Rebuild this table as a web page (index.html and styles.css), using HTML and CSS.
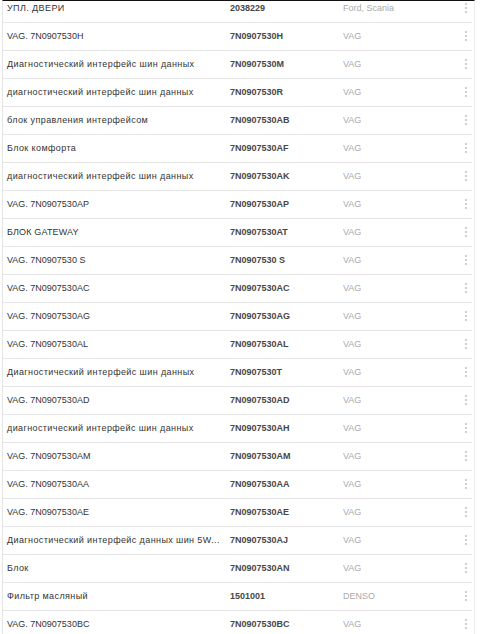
FILE: index.html
```html
<!DOCTYPE html>
<html lang="ru">
<head>
<meta charset="utf-8">
<link rel="stylesheet" href="styles.css">
</head>
<body>
<div class="viewport">
  <div class="list">
    <div class="row"><span class="name cyr">УПЛ. ДВЕРИ</span><span class="code">2038229</span><span class="brand">Ford, Scania</span><span class="more"><svg width="4" height="12" viewBox="0 0 4 12"><circle cx="2" cy="2" r="1.1"/><circle cx="2" cy="6" r="1.1"/><circle cx="2" cy="10" r="1.1"/></svg></span></div>
    <div class="row"><span class="name">VAG. 7N0907530H</span><span class="code">7N0907530H</span><span class="brand">VAG</span><span class="more"><svg width="4" height="12" viewBox="0 0 4 12"><circle cx="2" cy="2" r="1.1"/><circle cx="2" cy="6" r="1.1"/><circle cx="2" cy="10" r="1.1"/></svg></span></div>
    <div class="row"><span class="name cyr">Диагностический интерфейс шин данных</span><span class="code">7N0907530M</span><span class="brand">VAG</span><span class="more"><svg width="4" height="12" viewBox="0 0 4 12"><circle cx="2" cy="2" r="1.1"/><circle cx="2" cy="6" r="1.1"/><circle cx="2" cy="10" r="1.1"/></svg></span></div>
    <div class="row"><span class="name cyr">диагностический интерфейс шин данных</span><span class="code">7N0907530R</span><span class="brand">VAG</span><span class="more"><svg width="4" height="12" viewBox="0 0 4 12"><circle cx="2" cy="2" r="1.1"/><circle cx="2" cy="6" r="1.1"/><circle cx="2" cy="10" r="1.1"/></svg></span></div>
    <div class="row"><span class="name cyr">блок управления интерфейсом</span><span class="code">7N0907530AB</span><span class="brand">VAG</span><span class="more"><svg width="4" height="12" viewBox="0 0 4 12"><circle cx="2" cy="2" r="1.1"/><circle cx="2" cy="6" r="1.1"/><circle cx="2" cy="10" r="1.1"/></svg></span></div>
    <div class="row"><span class="name cyr">Блок комфорта</span><span class="code">7N0907530AF</span><span class="brand">VAG</span><span class="more"><svg width="4" height="12" viewBox="0 0 4 12"><circle cx="2" cy="2" r="1.1"/><circle cx="2" cy="6" r="1.1"/><circle cx="2" cy="10" r="1.1"/></svg></span></div>
    <div class="row"><span class="name cyr">диагностический интерфейс шин данных</span><span class="code">7N0907530AK</span><span class="brand">VAG</span><span class="more"><svg width="4" height="12" viewBox="0 0 4 12"><circle cx="2" cy="2" r="1.1"/><circle cx="2" cy="6" r="1.1"/><circle cx="2" cy="10" r="1.1"/></svg></span></div>
    <div class="row"><span class="name">VAG. 7N0907530AP</span><span class="code">7N0907530AP</span><span class="brand">VAG</span><span class="more"><svg width="4" height="12" viewBox="0 0 4 12"><circle cx="2" cy="2" r="1.1"/><circle cx="2" cy="6" r="1.1"/><circle cx="2" cy="10" r="1.1"/></svg></span></div>
    <div class="row"><span class="name cyr-light">БЛОК GATEWAY</span><span class="code">7N0907530AT</span><span class="brand">VAG</span><span class="more"><svg width="4" height="12" viewBox="0 0 4 12"><circle cx="2" cy="2" r="1.1"/><circle cx="2" cy="6" r="1.1"/><circle cx="2" cy="10" r="1.1"/></svg></span></div>
    <div class="row"><span class="name">VAG. 7N0907530 S</span><span class="code">7N0907530 S</span><span class="brand">VAG</span><span class="more"><svg width="4" height="12" viewBox="0 0 4 12"><circle cx="2" cy="2" r="1.1"/><circle cx="2" cy="6" r="1.1"/><circle cx="2" cy="10" r="1.1"/></svg></span></div>
    <div class="row"><span class="name">VAG. 7N0907530AC</span><span class="code">7N0907530AC</span><span class="brand">VAG</span><span class="more"><svg width="4" height="12" viewBox="0 0 4 12"><circle cx="2" cy="2" r="1.1"/><circle cx="2" cy="6" r="1.1"/><circle cx="2" cy="10" r="1.1"/></svg></span></div>
    <div class="row"><span class="name">VAG. 7N0907530AG</span><span class="code">7N0907530AG</span><span class="brand">VAG</span><span class="more"><svg width="4" height="12" viewBox="0 0 4 12"><circle cx="2" cy="2" r="1.1"/><circle cx="2" cy="6" r="1.1"/><circle cx="2" cy="10" r="1.1"/></svg></span></div>
    <div class="row"><span class="name">VAG. 7N0907530AL</span><span class="code">7N0907530AL</span><span class="brand">VAG</span><span class="more"><svg width="4" height="12" viewBox="0 0 4 12"><circle cx="2" cy="2" r="1.1"/><circle cx="2" cy="6" r="1.1"/><circle cx="2" cy="10" r="1.1"/></svg></span></div>
    <div class="row"><span class="name cyr">Диагностический интерфейс шин данных</span><span class="code">7N0907530T</span><span class="brand">VAG</span><span class="more"><svg width="4" height="12" viewBox="0 0 4 12"><circle cx="2" cy="2" r="1.1"/><circle cx="2" cy="6" r="1.1"/><circle cx="2" cy="10" r="1.1"/></svg></span></div>
    <div class="row"><span class="name">VAG. 7N0907530AD</span><span class="code">7N0907530AD</span><span class="brand">VAG</span><span class="more"><svg width="4" height="12" viewBox="0 0 4 12"><circle cx="2" cy="2" r="1.1"/><circle cx="2" cy="6" r="1.1"/><circle cx="2" cy="10" r="1.1"/></svg></span></div>
    <div class="row"><span class="name cyr">диагностический интерфейс шин данных</span><span class="code">7N0907530AH</span><span class="brand">VAG</span><span class="more"><svg width="4" height="12" viewBox="0 0 4 12"><circle cx="2" cy="2" r="1.1"/><circle cx="2" cy="6" r="1.1"/><circle cx="2" cy="10" r="1.1"/></svg></span></div>
    <div class="row"><span class="name">VAG. 7N0907530AM</span><span class="code">7N0907530AM</span><span class="brand">VAG</span><span class="more"><svg width="4" height="12" viewBox="0 0 4 12"><circle cx="2" cy="2" r="1.1"/><circle cx="2" cy="6" r="1.1"/><circle cx="2" cy="10" r="1.1"/></svg></span></div>
    <div class="row"><span class="name">VAG. 7N0907530AA</span><span class="code">7N0907530AA</span><span class="brand">VAG</span><span class="more"><svg width="4" height="12" viewBox="0 0 4 12"><circle cx="2" cy="2" r="1.1"/><circle cx="2" cy="6" r="1.1"/><circle cx="2" cy="10" r="1.1"/></svg></span></div>
    <div class="row"><span class="name">VAG. 7N0907530AE</span><span class="code">7N0907530AE</span><span class="brand">VAG</span><span class="more"><svg width="4" height="12" viewBox="0 0 4 12"><circle cx="2" cy="2" r="1.1"/><circle cx="2" cy="6" r="1.1"/><circle cx="2" cy="10" r="1.1"/></svg></span></div>
    <div class="row"><span class="name cyr">Диагностический интерфейс данных шин 5W...</span><span class="code">7N0907530AJ</span><span class="brand">VAG</span><span class="more"><svg width="4" height="12" viewBox="0 0 4 12"><circle cx="2" cy="2" r="1.1"/><circle cx="2" cy="6" r="1.1"/><circle cx="2" cy="10" r="1.1"/></svg></span></div>
    <div class="row"><span class="name cyr">Блок</span><span class="code">7N0907530AN</span><span class="brand">VAG</span><span class="more"><svg width="4" height="12" viewBox="0 0 4 12"><circle cx="2" cy="2" r="1.1"/><circle cx="2" cy="6" r="1.1"/><circle cx="2" cy="10" r="1.1"/></svg></span></div>
    <div class="row"><span class="name cyr">Фильтр масляный</span><span class="code">1501001</span><span class="brand">DENSO</span><span class="more"><svg width="4" height="12" viewBox="0 0 4 12"><circle cx="2" cy="2" r="1.1"/><circle cx="2" cy="6" r="1.1"/><circle cx="2" cy="10" r="1.1"/></svg></span></div>
    <div class="row"><span class="name">VAG. 7N0907530BC</span><span class="code">7N0907530BC</span><span class="brand">VAG</span><span class="more"><svg width="4" height="12" viewBox="0 0 4 12"><circle cx="2" cy="2" r="1.1"/><circle cx="2" cy="6" r="1.1"/><circle cx="2" cy="10" r="1.1"/></svg></span></div>
  </div>
</div>
</body>
</html>
```
FILE: styles.css
```css
html, body {
  margin: 0;
  padding: 0;
  background: #fff;
}
body {
  font-family: "Liberation Sans", Arial, sans-serif;
  font-size: 9px;
  color: #333;
}
.viewport {
  height: 633px;
  overflow: hidden;
  border-top: 1px solid #111;
  margin-left: 2px;
  width: 471px;
  border-left: 1px solid #e4e4e4;
  border-right: 1px solid #ececec;
}
.list {
  margin-top: -6px;
  margin-right: 2px;
}
.row {
  display: grid;
  grid-template-columns: 223px 113px 1fr 8px;
  align-items: center;
  height: 25px;
  padding-bottom: 2px;
  border-bottom: 1px solid #e6e6e6;
  padding-left: 4px;
}
.name {
  white-space: nowrap;
  color: #333;
}
.cyr {
  letter-spacing: 0.4px;
}
.cyr-light {
  letter-spacing: 0.15px;
}
.code {
  font-weight: bold;
  color: #474747;
}
.brand {
  color: #aaa;
}
.more {
  display: flex;
  align-items: center;
}
.more svg {
  fill: #c4c4c4;
  display: block;
}
```
